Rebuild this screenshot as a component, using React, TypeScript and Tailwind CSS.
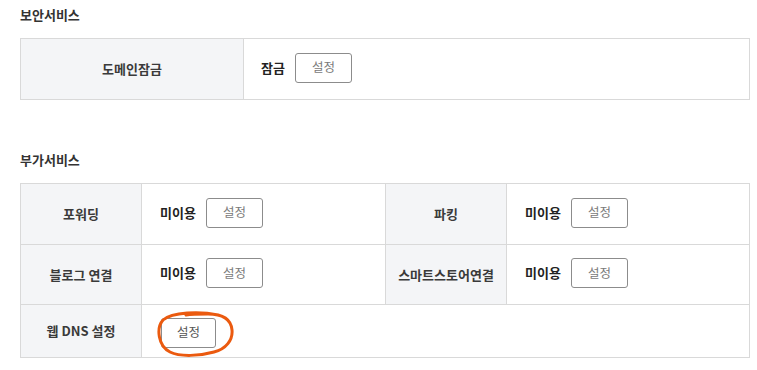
const font = { fontFamily: '"Noto Sans CJK KR", "Noto Sans", sans-serif' };

function SetButton({ dark = false, narrow = false }: { dark?: boolean; narrow?: boolean }) {
  return (
    <button
      className={`h-[30px] ${narrow ? 'w-[55px]' : 'w-[57px]'} rounded-[3px] border border-[#8c8c8c] bg-white text-[12.5px] leading-none ${dark ? 'text-[#555]' : 'text-[#7a7a7a]'}`}
    >
      설정
    </button>
  );
}

function Status({ text }: { text: string }) {
  return (
    <div className="flex items-center gap-[10px]">
      <span className="text-[13px] font-bold text-[#222]">{text}</span>
      <SetButton />
    </div>
  );
}

const th = 'border border-[#d9d9d9] bg-[#f4f5f7] text-center text-[13px] font-semibold text-[#3a3a3a]';
const td = 'border border-[#d9d9d9] bg-white pb-[3px]';

export default function App() {
  return (
    <div className="min-h-screen bg-white px-[20px] pt-[5px]" style={font}>
      <h2 className="mb-[14px] text-[13px] font-semibold leading-[19px] text-[#333]">보안서비스</h2>
      <table className="w-[730px] table-fixed border-collapse">
        <colgroup>
          <col className="w-[223px]" />
          <col />
        </colgroup>
        <tbody>
          <tr className="h-[61px]">
            <th className={th}>도메인잠금</th>
            <td className={`${td} pl-[17px]`}>
              <Status text="잠금" />
            </td>
          </tr>
        </tbody>
      </table>

      <h2 className="mb-[14px] mt-[50px] text-[13px] font-semibold leading-[19px] text-[#333]">부가서비스</h2>
      <table className="w-[730px] table-fixed border-collapse">
        <colgroup>
          <col className="w-[121px]" />
          <col className="w-[244px]" />
          <col className="w-[121px]" />
          <col />
        </colgroup>
        <tbody>
          <tr className="h-[61px]">
            <th className={th}>포워딩</th>
            <td className={`${td} pl-[18px]`}>
              <Status text="미이용" />
            </td>
            <th className={th}>파킹</th>
            <td className={`${td} pl-[18px]`}>
              <Status text="미이용" />
            </td>
          </tr>
          <tr className="h-[60px]">
            <th className={th}>블로그 연결</th>
            <td className={`${td} pl-[18px]`}>
              <Status text="미이용" />
            </td>
            <th className={`${th} px-0`}>스마트스토어연결</th>
            <td className={`${td} pl-[18px]`}>
              <Status text="미이용" />
            </td>
          </tr>
          <tr className="h-[53px]">
            <th className={th}>웹 DNS 설정</th>
            <td className="relative border border-[#d9d9d9] bg-white pl-[19px] pt-[3px]" colSpan={3}>
              <SetButton dark narrow />
              <svg
                className="pointer-events-none absolute left-[14px] top-[3px]"
                width="80"
                height="50"
                viewBox="0 0 80 50"
                fill="none"
              >
                <path
                  d="M 62 7 C 44 3, 16 4, 7 12 C 0 20, 2 38, 14 44 C 24 49, 44 48, 58 44 C 70 41, 77 32, 76 22 C 75 11, 66 6, 52 6 C 44 6, 36 6, 30 7"
                  stroke="#eb5a0f"
                  strokeWidth="3"
                  strokeLinecap="round"
                />
              </svg>
            </td>
          </tr>
        </tbody>
      </table>
    </div>
  );
}
